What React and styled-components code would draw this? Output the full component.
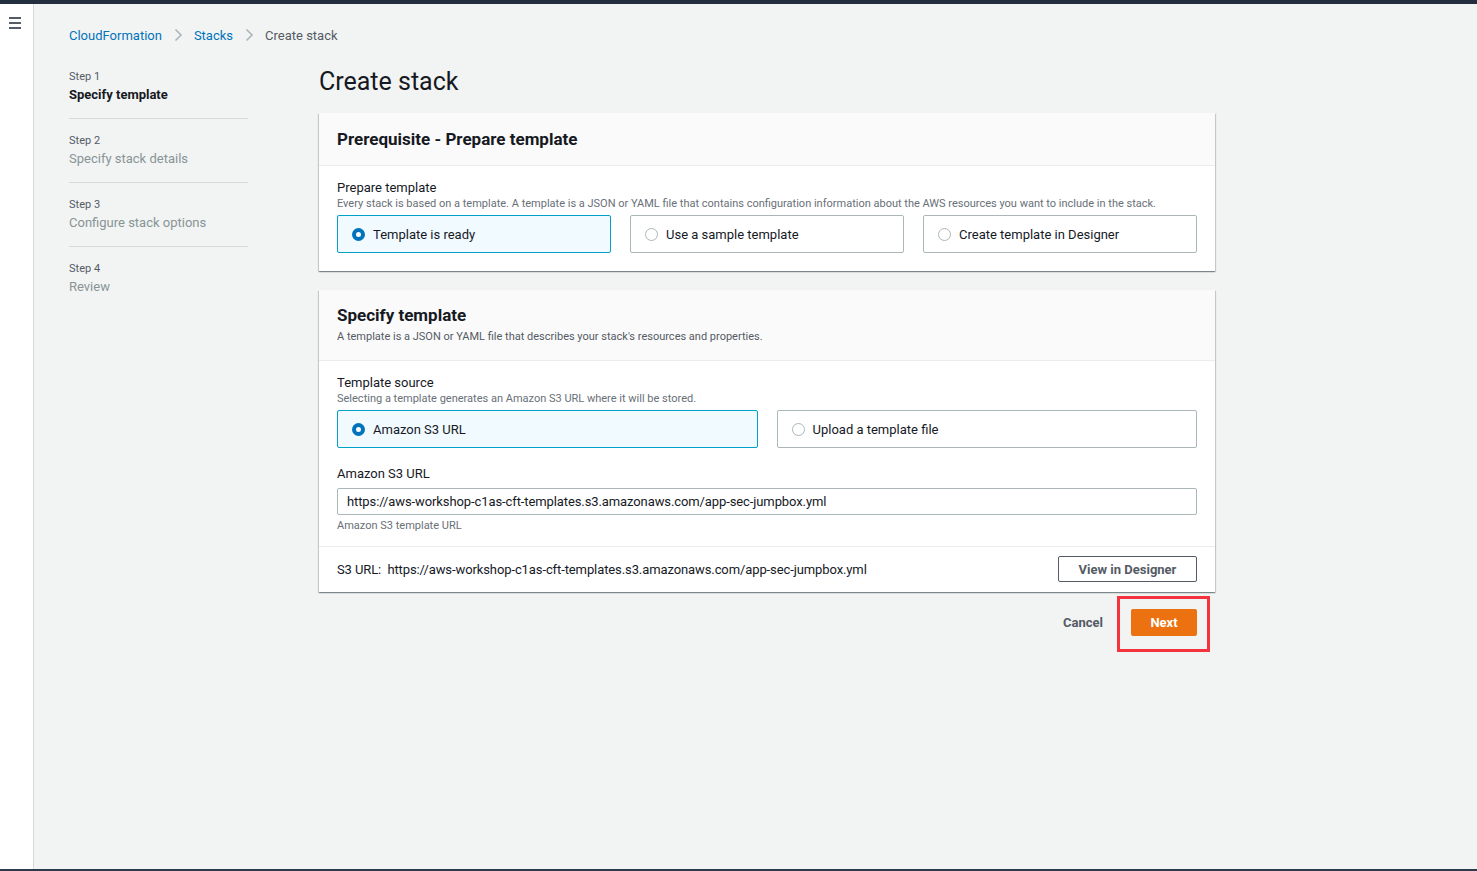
import React from 'react';
import styled, { createGlobalStyle } from 'styled-components';

const GlobalStyle = createGlobalStyle`
    * { box-sizing: border-box; }
    body {
        margin: 0;
        font-family: Roboto, "Liberation Sans", sans-serif;
        color: #16191f;
        background: #f2f3f3;
    }
`;

const steps = [
    { n: 1, title: 'Specify template', active: true },
    { n: 2, title: 'Specify stack details' },
    { n: 3, title: 'Configure stack options' },
    { n: 4, title: 'Review' },
];

const templateUrl = 'https://aws-workshop-c1as-cft-templates.s3.amazonaws.com/app-sec-jumpbox.yml';

function Chevron() {
    return (
        <svg width="12" height="16" viewBox="0 0 12 16">
            <path d="M3.5 2.5 L9 8 L3.5 13.5" fill="none" stroke="#aab7b8" strokeWidth="1.6" />
        </svg>
    );
}

function Radio({ checked }) {
    return <RadioDot $checked={checked} />;
}

function App() {
    return (
        <>
            <GlobalStyle />
            <Page>
                <SideRail>
                    <Burger>
                        <span /><span /><span />
                    </Burger>
                </SideRail>
                <Main>
                    <Breadcrumbs>
                        <Crumb $link>CloudFormation</Crumb>
                        <Chevron />
                        <Crumb $link>Stacks</Crumb>
                        <Chevron />
                        <Crumb>Create stack</Crumb>
                    </Breadcrumbs>

                    <Layout>
                        <StepNav>
                            {steps.map((s) => (
                                <StepItem key={s.n}>
                                    <StepNum>Step {s.n}</StepNum>
                                    <StepTitle $active={s.active}>{s.title}</StepTitle>
                                </StepItem>
                            ))}
                        </StepNav>

                        <Content>
                            <PageTitle>Create stack</PageTitle>

                            {/* Prerequisite */}
                            <Container>
                                <ContainerHeader>
                                    <h2>Prerequisite - Prepare template</h2>
                                </ContainerHeader>
                                <ContainerBody $pb={18}>
                                    <FieldLabel>Prepare template</FieldLabel>
                                    <FieldDesc>Every stack is based on a template. A template is a JSON or YAML file that contains configuration information about the AWS resources you want to include in the stack.</FieldDesc>
                                    <Tiles $cols={3}>
                                        <Tile $selected><Radio checked />Template is ready</Tile>
                                        <Tile><Radio />Use a sample template</Tile>
                                        <Tile><Radio />Create template in Designer</Tile>
                                    </Tiles>
                                </ContainerBody>
                            </Container>

                            {/* Specify template */}
                            <Container>
                                <ContainerHeader $tall>
                                    <h2>Specify template</h2>
                                    <p>A template is a JSON or YAML file that describes your stack's resources and properties.</p>
                                </ContainerHeader>
                                <ContainerBody $pb={13}>
                                    <FieldLabel>Template source</FieldLabel>
                                    <FieldDesc>Selecting a template generates an Amazon S3 URL where it will be stored.</FieldDesc>
                                    <Tiles $cols={2}>
                                        <Tile $selected><Radio checked />Amazon S3 URL</Tile>
                                        <Tile><Radio />Upload a template file</Tile>
                                    </Tiles>

                                    <UrlField>
                                        <FieldLabel>Amazon S3 URL</FieldLabel>
                                        <TextInput readOnly value={templateUrl} />
                                        <Hint>Amazon S3 template URL</Hint>
                                    </UrlField>
                                </ContainerBody>
                                <ContainerFooter>
                                    <UrlText>S3 URL:&nbsp; {templateUrl}</UrlText>
                                    <NormalButton>View in Designer</NormalButton>
                                </ContainerFooter>
                            </Container>

                            <Actions>
                                <LinkButton>Cancel</LinkButton>
                                <Highlight>
                                    <PrimaryButton>Next</PrimaryButton>
                                </Highlight>
                            </Actions>
                        </Content>
                    </Layout>
                </Main>
            </Page>
        </>
    );
}

const Page = styled.div`
    display: flex;
    height: 871px;
    border-top: 4px solid #232f3e;
    border-bottom: 2px solid #2d3a4a;
    overflow: hidden;
`;

const SideRail = styled.div`
    width: 34px;
    flex-shrink: 0;
    background: #fff;
    border-right: 1px solid #d5dbdb;
    padding: 13px 0 0 9px;
`;

const Burger = styled.div`
    display: flex;
    flex-direction: column;
    gap: 3px;
    width: 12px;

    span {
        display: block;
        height: 2px;
        background: #545b64;
    }
`;

const Main = styled.div`
    flex: 1;
    background: #f2f3f3;
    padding: 22px 0 0 35px;
`;

const Breadcrumbs = styled.nav`
    display: flex;
    align-items: center;
    gap: 10px;
    height: 18px;
    font-size: 13px;
`;

const Crumb = styled.span`
    color: ${(p) => (p.$link ? '#0073bb' : '#545b64')};
`;

const Layout = styled.div`
    display: flex;
    gap: 71px;
    margin-top: 21px;
`;

const StepNav = styled.div`
    width: 179px;
    padding-top: 4px;
`;

const StepItem = styled.div`
    padding: 0 0 14px;
    margin-bottom: 14px;
    border-bottom: 1px solid #d5dbdb;

    &:last-child {
        border-bottom: none;
    }
`;

const StepNum = styled.div`
    font-size: 11px;
    line-height: 16px;
    color: #545b64;
`;

const StepTitle = styled.div`
    font-size: 13px;
    line-height: 18px;
    margin-top: 1px;
    color: ${(p) => (p.$active ? '#16191f' : '#879596')};
    font-weight: ${(p) => (p.$active ? 700 : 400)};
`;

const Content = styled.div`
    width: 896px;
    display: flex;
    flex-direction: column;
`;

const PageTitle = styled.h1`
    margin: 0 0 14px;
    font-size: 25px;
    line-height: 34px;
    font-weight: 400;
    color: #16191f;
`;

const Container = styled.section`
    background: #fff;
    margin-bottom: 19px;
    box-shadow: 0 1px 1px 0 rgba(0, 28, 36, 0.3), 1px 1px 1px 0 rgba(0, 28, 36, 0.15), -1px 1px 1px 0 rgba(0, 28, 36, 0.15);
`;

const ContainerHeader = styled.div`
    background: #fafafa;
    border-bottom: 1px solid #eaeded;
    padding: ${(p) => (p.$tall ? '14px 18px 15px' : '15px 18px 15px')};

    h2 {
        margin: 0;
        font-size: 17px;
        line-height: 22px;
        font-weight: 700;
    }

    p {
        margin: 3px 0 0;
        font-size: 11px;
        line-height: 16px;
        color: #545b64;
    }
`;

const ContainerBody = styled.div`
    padding: 14px 18px ${(p) => p.$pb}px;
`;

const FieldLabel = styled.div`
    font-size: 13px;
    line-height: 16px;
    color: #16191f;
`;

const FieldDesc = styled.div`
    font-size: 11px;
    line-height: 16px;
    color: #687078;
`;

const Tiles = styled.div`
    display: grid;
    grid-template-columns: repeat(${(p) => p.$cols}, 1fr);
    gap: 19px;
    margin-top: 3px;
`;

const Tile = styled.div`
    display: flex;
    align-items: center;
    gap: 8px;
    height: 38px;
    padding: 0 14px;
    font-size: 13px;
    border: 1px solid ${(p) => (p.$selected ? '#00a1c9' : '#aab7b8')};
    background: ${(p) => (p.$selected ? '#f1faff' : '#fff')};
    border-radius: 2px;
`;

const RadioDot = styled.span`
    width: 13px;
    height: 13px;
    border-radius: 50%;
    flex-shrink: 0;
    border: ${(p) => (p.$checked ? '4px solid #0073bb' : '1px solid #aab7b8')};
    background: #fff;
`;

const UrlField = styled.div`
    margin-top: 18px;
`;

const TextInput = styled.input`
    display: block;
    width: 100%;
    height: 27px;
    margin-top: 6px;
    padding: 0 9px;
    border: 1px solid #aab7b8;
    border-radius: 2px;
    font-family: inherit;
    font-size: 13px;
    letter-spacing: -0.1px;
    color: #16191f;
    outline: none;
`;

const Hint = styled.div`
    margin-top: 4px;
    font-size: 11px;
    line-height: 14px;
    color: #687078;
`;

const ContainerFooter = styled.div`
    display: flex;
    align-items: center;
    justify-content: space-between;
    border-top: 1px solid #eaeded;
    padding: 9px 18px 10px;
    font-size: 13px;
`;

const UrlText = styled.span`
    letter-spacing: -0.1px;
`;

const NormalButton = styled.button`
    width: 139px;
    height: 26px;
    border: 1px solid #545b64;
    border-radius: 2px;
    background: #fff;
    color: #545b64;
    font-family: inherit;
    font-size: 13px;
    font-weight: 700;
`;

const Actions = styled.div`
    display: flex;
    justify-content: flex-end;
    align-items: center;
    gap: 28px;
    margin-top: -19px;
    padding-right: 18px;
`;

const LinkButton = styled.button`
    border: none;
    background: none;
    padding: 0;
    color: #545b64;
    font-family: inherit;
    font-size: 13px;
    font-weight: 700;
`;

const Highlight = styled.div`
    position: relative;
    padding: 17px 0 16px;

    &::after {
        content: '';
        position: absolute;
        left: -14px;
        right: -13px;
        top: 4px;
        bottom: 0;
        border: 3px solid #f5333f;
    }
`;

const PrimaryButton = styled.button`
    display: block;
    width: 66px;
    height: 27px;
    border: none;
    border-radius: 2px;
    background: #ec7211;
    color: #fff;
    font-family: inherit;
    font-size: 13px;
    font-weight: 700;
`;

export default App;
